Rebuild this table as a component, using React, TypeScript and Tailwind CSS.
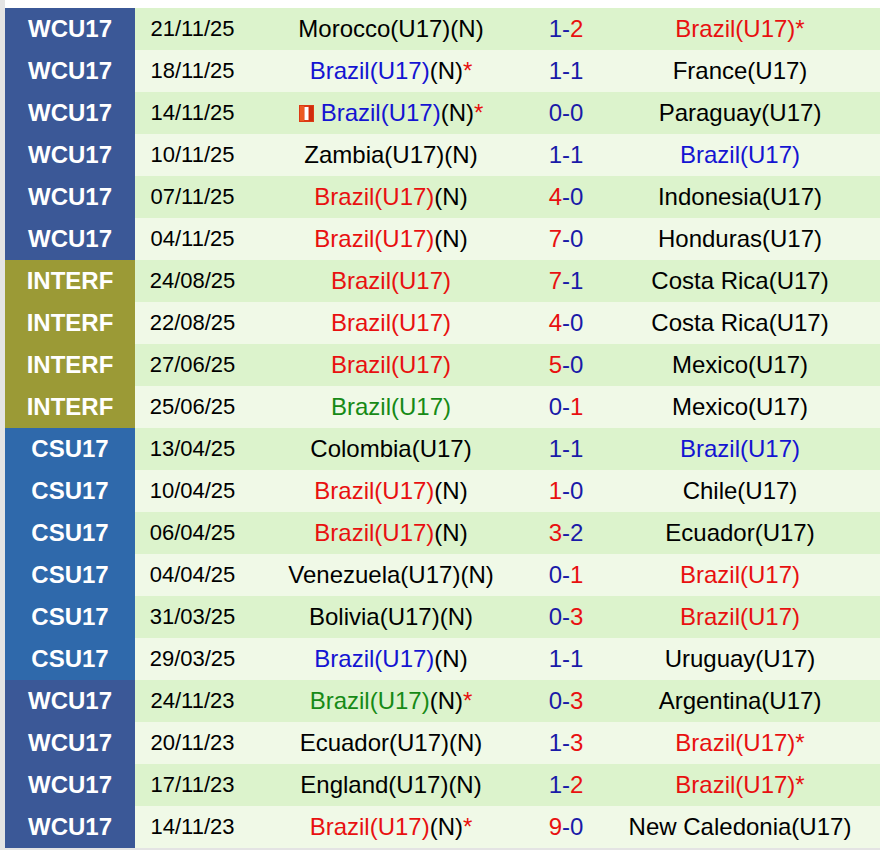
import React from 'react';

type Tone = 'red' | 'blue' | 'green' | 'black';

type Team = {
  name: string;
  tone: Tone;
  neutral?: boolean;
  star?: boolean;
  card?: boolean;
};

type Match = {
  comp: 'WCU17' | 'INTERF' | 'CSU17';
  date: string;
  home: Team;
  hg: number;
  ag: number;
  away: Team;
};

const toneClass: Record<Tone, string> = {
  red: 'text-[#e81010]',
  blue: 'text-[#1414d2]',
  green: 'text-[#168a16]',
  black: 'text-black',
};

const compClass: Record<Match['comp'], string> = {
  WCU17: 'bg-[#3b5897]',
  INTERF: 'bg-[#9b9a36]',
  CSU17: 'bg-[#2f69ab]',
};

const B = 'Brazil(U17)';

const matches: Match[] = [
  { comp: 'WCU17', date: '21/11/25', home: { name: 'Morocco(U17)', tone: 'black', neutral: true }, hg: 1, ag: 2, away: { name: B, tone: 'red', star: true } },
  { comp: 'WCU17', date: '18/11/25', home: { name: B, tone: 'blue', neutral: true, star: true }, hg: 1, ag: 1, away: { name: 'France(U17)', tone: 'black' } },
  { comp: 'WCU17', date: '14/11/25', home: { name: B, tone: 'blue', neutral: true, star: true, card: true }, hg: 0, ag: 0, away: { name: 'Paraguay(U17)', tone: 'black' } },
  { comp: 'WCU17', date: '10/11/25', home: { name: 'Zambia(U17)', tone: 'black', neutral: true }, hg: 1, ag: 1, away: { name: B, tone: 'blue' } },
  { comp: 'WCU17', date: '07/11/25', home: { name: B, tone: 'red', neutral: true }, hg: 4, ag: 0, away: { name: 'Indonesia(U17)', tone: 'black' } },
  { comp: 'WCU17', date: '04/11/25', home: { name: B, tone: 'red', neutral: true }, hg: 7, ag: 0, away: { name: 'Honduras(U17)', tone: 'black' } },
  { comp: 'INTERF', date: '24/08/25', home: { name: B, tone: 'red' }, hg: 7, ag: 1, away: { name: 'Costa Rica(U17)', tone: 'black' } },
  { comp: 'INTERF', date: '22/08/25', home: { name: B, tone: 'red' }, hg: 4, ag: 0, away: { name: 'Costa Rica(U17)', tone: 'black' } },
  { comp: 'INTERF', date: '27/06/25', home: { name: B, tone: 'red' }, hg: 5, ag: 0, away: { name: 'Mexico(U17)', tone: 'black' } },
  { comp: 'INTERF', date: '25/06/25', home: { name: B, tone: 'green' }, hg: 0, ag: 1, away: { name: 'Mexico(U17)', tone: 'black' } },
  { comp: 'CSU17', date: '13/04/25', home: { name: 'Colombia(U17)', tone: 'black' }, hg: 1, ag: 1, away: { name: B, tone: 'blue' } },
  { comp: 'CSU17', date: '10/04/25', home: { name: B, tone: 'red', neutral: true }, hg: 1, ag: 0, away: { name: 'Chile(U17)', tone: 'black' } },
  { comp: 'CSU17', date: '06/04/25', home: { name: B, tone: 'red', neutral: true }, hg: 3, ag: 2, away: { name: 'Ecuador(U17)', tone: 'black' } },
  { comp: 'CSU17', date: '04/04/25', home: { name: 'Venezuela(U17)', tone: 'black', neutral: true }, hg: 0, ag: 1, away: { name: B, tone: 'red' } },
  { comp: 'CSU17', date: '31/03/25', home: { name: 'Bolivia(U17)', tone: 'black', neutral: true }, hg: 0, ag: 3, away: { name: B, tone: 'red' } },
  { comp: 'CSU17', date: '29/03/25', home: { name: B, tone: 'blue', neutral: true }, hg: 1, ag: 1, away: { name: 'Uruguay(U17)', tone: 'black' } },
  { comp: 'WCU17', date: '24/11/23', home: { name: B, tone: 'green', neutral: true, star: true }, hg: 0, ag: 3, away: { name: 'Argentina(U17)', tone: 'black' } },
  { comp: 'WCU17', date: '20/11/23', home: { name: 'Ecuador(U17)', tone: 'black', neutral: true }, hg: 1, ag: 3, away: { name: B, tone: 'red', star: true } },
  { comp: 'WCU17', date: '17/11/23', home: { name: 'England(U17)', tone: 'black', neutral: true }, hg: 1, ag: 2, away: { name: B, tone: 'red', star: true } },
  { comp: 'WCU17', date: '14/11/23', home: { name: B, tone: 'red', neutral: true, star: true }, hg: 9, ag: 0, away: { name: 'New Caledonia(U17)', tone: 'black' } },
];

const RedCard = () => (
  <svg width="15" height="17" viewBox="0 0 15 17" className="mr-[7px] shrink-0">
    <rect x="0" y="0" width="15" height="17" fill="#dc3a14" />
    <rect x="1" y="1" width="4" height="15" fill="#ec5a22" />
    <rect x="10" y="1" width="4" height="15" fill="#d02c0c" />
    <rect x="5.5" y="2" width="4" height="13" fill="#ffffff" />
  </svg>
);

const TeamCell = ({ team }: { team: Team }) => (
  <div className="flex items-center justify-center whitespace-nowrap">
    {team.card && <RedCard />}
    <span className={toneClass[team.tone]}>{team.name}</span>
    {team.neutral && <span className="text-black">(N)</span>}
    {team.star && <span className="text-[#e81010]">*</span>}
  </div>
);

const Score = ({ hg, ag }: { hg: number; ag: number }) => (
  <div className="flex items-center justify-center whitespace-nowrap">
    <span className={hg > ag ? 'text-[#e81010]' : 'text-[#1a1aa8]'}>{hg}</span>
    <span className="text-[#1a1aa8]">-</span>
    <span className={ag > hg ? 'text-[#e81010]' : 'text-[#1a1aa8]'}>{ag}</span>
  </div>
);

export default function App() {
  return (
    <div className="w-[880px] h-[850px] bg-white flex flex-col font-['Liberation_Sans',Arial,sans-serif]">
      <div className="flex flex-1">
        <div className="w-[5px] bg-[#e4e4e4]" />
        <div className="flex-1 pt-[8px]">
          {matches.map((m, i) => (
            <div
              key={i}
              className={`grid grid-cols-[130px_115px_282px_68px_1fr] h-[42px] text-[24px] leading-none ${
                i % 2 === 0 ? 'bg-[#dcf3cc]' : 'bg-[#f0f9e7]'
              }`}
            >
              <div className={`flex items-center justify-center font-bold text-white ${compClass[m.comp]}`}>
                {m.comp}
              </div>
              <div className="flex items-center justify-center text-[22px] text-black">{m.date}</div>
              <TeamCell team={m.home} />
              <Score hg={m.hg} ag={m.ag} />
              <TeamCell team={m.away} />
            </div>
          ))}
        </div>
      </div>
      <div className="h-[2px] bg-[#e4e4e4]" />
    </div>
  );
}
